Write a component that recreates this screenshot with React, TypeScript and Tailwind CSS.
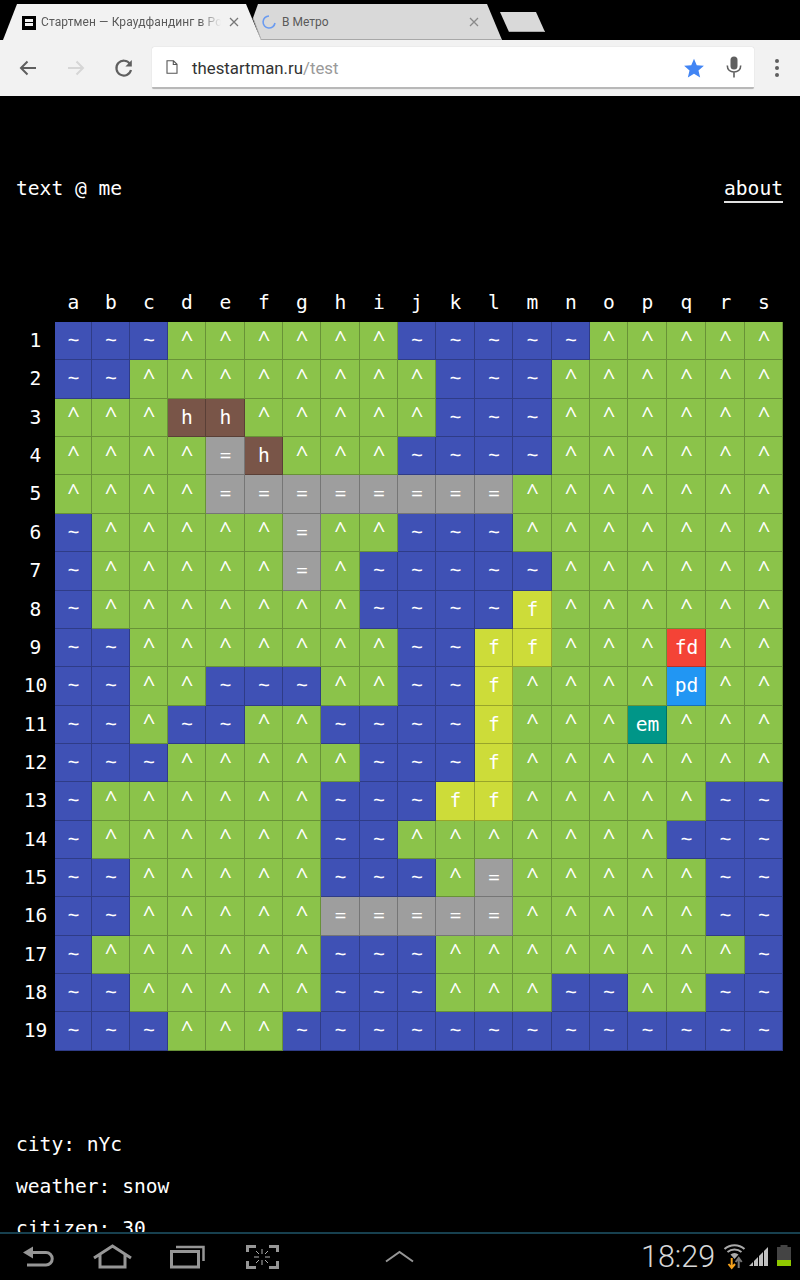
const mono = "font-['DejaVu_Sans_Mono',monospace]";

const columns = "abcdefghijklmnopqrs".split("");

// one token per cell, row 1 to 19
const rows = [
  "~ ~ ~ ^ ^ ^ ^ ^ ^ ~ ~ ~ ~ ~ ^ ^ ^ ^ ^",
  "~ ~ ^ ^ ^ ^ ^ ^ ^ ^ ~ ~ ~ ^ ^ ^ ^ ^ ^",
  "^ ^ ^ h h ^ ^ ^ ^ ^ ~ ~ ~ ^ ^ ^ ^ ^ ^",
  "^ ^ ^ ^ = h ^ ^ ^ ~ ~ ~ ~ ^ ^ ^ ^ ^ ^",
  "^ ^ ^ ^ = = = = = = = = ^ ^ ^ ^ ^ ^ ^",
  "~ ^ ^ ^ ^ ^ = ^ ^ ~ ~ ~ ^ ^ ^ ^ ^ ^ ^",
  "~ ^ ^ ^ ^ ^ = ^ ~ ~ ~ ~ ~ ^ ^ ^ ^ ^ ^",
  "~ ^ ^ ^ ^ ^ ^ ^ ~ ~ ~ ~ f ^ ^ ^ ^ ^ ^",
  "~ ~ ^ ^ ^ ^ ^ ^ ^ ~ ~ f f ^ ^ ^ fd ^ ^",
  "~ ~ ^ ^ ~ ~ ~ ^ ^ ~ ~ f ^ ^ ^ ^ pd ^ ^",
  "~ ~ ^ ~ ~ ^ ^ ~ ~ ~ ~ f ^ ^ ^ em ^ ^ ^",
  "~ ~ ~ ^ ^ ^ ^ ^ ~ ~ ~ f ^ ^ ^ ^ ^ ^ ^",
  "~ ^ ^ ^ ^ ^ ^ ~ ~ ~ f f ^ ^ ^ ^ ^ ~ ~",
  "~ ^ ^ ^ ^ ^ ^ ~ ~ ^ ^ ^ ^ ^ ^ ^ ~ ~ ~",
  "~ ~ ^ ^ ^ ^ ^ ~ ~ ~ ^ = ^ ^ ^ ^ ^ ~ ~",
  "~ ~ ^ ^ ^ ^ ^ = = = = = ^ ^ ^ ^ ^ ~ ~",
  "~ ^ ^ ^ ^ ^ ^ ~ ~ ~ ^ ^ ^ ^ ^ ^ ^ ^ ~",
  "~ ~ ^ ^ ^ ^ ^ ~ ~ ~ ^ ^ ^ ~ ~ ^ ^ ~ ~",
  "~ ~ ~ ^ ^ ^ ~ ~ ~ ~ ~ ~ ~ ~ ~ ~ ~ ~ ~",
].map((r) => r.split(" "));

const cellColors: Record<string, string> = {
  "~": "bg-[#3f51b5]",
  "^": "bg-[#8bc34a]",
  h: "bg-[#795548]",
  "=": "bg-[#9e9e9e]",
  f: "bg-[#cddc39]",
  fd: "bg-[#f44336]",
  pd: "bg-[#2196f3]",
  em: "bg-[#009688]",
};

function cellText(cell: string) {
  if (cell === "^") return "pb-[5px] font-['Open_Sans',sans-serif] text-[22px]";
  if (cell === "~" || cell === "=") return "font-['Open_Sans',sans-serif] text-[21px]";
  return "text-[19.6px]";
}

function TabStrip() {
  return (
    <div className="relative h-10 bg-black">
      <svg width="800" height="40" className="absolute inset-0">
        <path d="M258 4 L253 18 L261 40 H502 L487 4 Z" fill="#d9d9d9" />
        <path d="M253 18 L261 39.500 H502" stroke="#a8a8a8" strokeWidth="1" fill="none" />
        <path d="M500 12 H536 L545 32 H509 Z" fill="#d9d9d9" />
        <path d="M509 31.500 H545" stroke="#aaa" strokeWidth="1" />
        <path d="M3 40 L17 4 H246 L261 40 Z" fill="#f2f2f2" />
      </svg>
      {/* active tab */}
      <div className="absolute left-[22px] top-[16px] h-[14px] w-[14px] bg-black">
        <div className="absolute left-0 top-[3px] h-[7px] w-[11px] bg-[#f2f2f2]" />
        <div className="absolute left-[3px] top-[6px] h-[1px] w-[8px] bg-black" />
        <div className="absolute left-0 top-0 h-[10px] w-[3px] bg-black" />
      </div>
      <div className="absolute left-[41px] top-[13px] w-[180px] overflow-hidden whitespace-nowrap font-['Roboto',sans-serif] text-[12px] leading-[18px] tracking-[0.1px] text-[#5a5a5a] [mask-image:linear-gradient(to_right,black_88%,transparent)]">
        Стартмен — Краудфандинг в России
      </div>
      <svg width="10" height="10" viewBox="0 0 10 10" className="absolute left-[229px] top-[17px]">
        <path d="M1 1 L9 9 M9 1 L1 9" stroke="#777" strokeWidth="1.3" />
      </svg>
      {/* second tab */}
      <svg width="16" height="16" viewBox="0 0 16 16" className="absolute left-[261px] top-[14px]">
        <path d="M8 2 A6 6 0 1 0 14 9" fill="none" stroke="#6a9bf0" strokeWidth="1.6" />
      </svg>
      <div className="absolute left-[282px] top-[13px] font-['Roboto',sans-serif] text-[12px] leading-[18px] text-[#5a5a5a]">
        В Метро
      </div>
      <svg width="10" height="10" viewBox="0 0 10 10" className="absolute left-[469px] top-[17px]">
        <path d="M1 1 L9 9 M9 1 L1 9" stroke="#8a8a8a" strokeWidth="1.3" />
      </svg>
    </div>
  );
}

function Toolbar() {
  return (
    <div className="flex h-14 items-center bg-[#f2f2f2]">
      <div className="flex w-[152px] items-center pl-[18px]">
        <svg width="20" height="20" viewBox="0 0 20 20">
          <path d="M18 10 H3 M9.500 3.500 L3 10 L9.500 16.500" fill="none" stroke="#5f5f5f" strokeWidth="2" />
        </svg>
        <svg width="20" height="20" viewBox="0 0 20 20" className="ml-[28px]">
          <path d="M2 10 H17 M10.500 3.500 L17 10 L10.500 16.500" fill="none" stroke="#d6d6d6" strokeWidth="2" />
        </svg>
        <svg width="20" height="20" viewBox="0 0 20 20" className="ml-[28px]">
          <path d="M16 6 A7.400 7.400 0 1 0 17 12" fill="none" stroke="#5f5f5f" strokeWidth="2.200" />
          <path d="M17.800 2 V8.400 H11.400 Z" fill="#5f5f5f" />
        </svg>
      </div>
      <div className="flex h-[42px] w-[602px] items-center rounded-[2px] border-b-2 border-[#b8b8b8] bg-white shadow-[0_0_1px_#bbb]">
        <svg width="12" height="14" viewBox="0 0 12 14" className="ml-[14px]">
          <path d="M1 .8 H7.500 L11 4.300 V13.200 H1 Z M7.300 .8 V4.500 H11" fill="none" stroke="#555" strokeWidth="1.100" />
        </svg>
        <div className="ml-[14px] mt-[2px] flex-1 font-['Roboto',sans-serif] text-[16.800px] leading-5 text-[#333]">
          thestartman.ru<span className="text-[#9a9a9a]">/test</span>
        </div>
        <svg width="22" height="22" viewBox="0 0 24 24" className="mr-[21px] mt-[1px]">
          <path d="M12 1.800 L15 9 L22.800 9.600 L16.900 14.700 L18.700 22.300 L12 18.300 L5.300 22.300 L7.100 14.700 L1.200 9.600 L9 9 Z" fill="#4285f4" />
        </svg>
        <svg width="16" height="22" viewBox="0 0 16 22" className="mr-[12px]">
          <rect x="4.500" y="0.500" width="7" height="13" rx="3.500" fill="#5f5f5f" />
          <path d="M1.300 9.500 C1.300 14 4.500 16 8 16 C11.500 16 14.700 14 14.700 9.500 M8 16 V21.500" fill="none" stroke="#5f5f5f" strokeWidth="1.600" />
        </svg>
      </div>
      <div className="ml-[21px] flex flex-col gap-[3px]">
        <div className="h-1 w-1 rounded-full bg-[#5f5f5f]" />
        <div className="h-1 w-1 rounded-full bg-[#5f5f5f]" />
        <div className="h-1 w-1 rounded-full bg-[#5f5f5f]" />
      </div>
    </div>
  );
}

function WorldMap() {
  return (
    <div className="ml-[16px] mr-[17px] mt-[81px]">
      <div className="grid grid-cols-[39px_37px_38px_38px_38px_39px_38px_38px_39px_38px_38px_39px_38px_39px_38px_38px_39px_39px_39px_38px] text-[19.600px] text-white">
        <div />
        {columns.map((c) => (
          <div key={c} className="h-[38px] text-center leading-[38px]">
            {c}
          </div>
        ))}
        {rows.map((row, y) => (
          <div key={y} className="contents">
            <div className="h-[38.370px] text-center leading-[37px]">{y + 1}</div>
            {row.map((cell, x) => (
              <div
                key={x}
                className={`${cellColors[cell]} ${cellText(cell)} flex h-[38.370px] items-center justify-center border-b border-r border-black/25 pl-px`}
              >
                {cell}
              </div>
            ))}
          </div>
        ))}
      </div>
    </div>
  );
}

function SystemBar() {
  return (
    <div className="relative h-[48px] shrink-0 border-t-2 border-[#17404f] bg-black">
      <svg width="420" height="40" viewBox="0 0 420 40" className="absolute left-0 top-[9px]">
        <g fill="none" stroke="#969696" strokeWidth="3">
          <path d="M30 9.500 H46 A6.250 6.250 0 0 1 46 22 H27" />
          <path d="M94 15 L112.500 3 L131 15 M100 12 V24 H125 V12" />
          <rect x="171.500" y="8.500" width="27" height="15.500" />
          <path d="M176 4 H203.500 V18" strokeWidth="2.500" />
          <path d="M247.500 9 V3.500 H256 M269 3.500 H277.500 V9 M247.500 18 V24.500 H256 M269 24.500 H277.500 V18" />
          <path d="M386 18.500 L399.500 9 L413 18.500" strokeWidth="2" />
        </g>
        <path d="M23 9.500 L33 3.500 V15.500 Z" fill="#969696" />
        <path d="M262 6 V11 M262 17 V22 M254 14 H259 M265 14 H270 M256 8 L259 11 M268 8 L265 11 M256 20 L259 17 M268 20 L265 17" stroke="#b0b0b0" strokeWidth="1" />
      </svg>
      <div className="absolute left-[641px] top-[5px] font-['Roboto',sans-serif] text-[30.500px] font-light leading-9 text-[#d8d8d8]">
        18:29
      </div>
      <svg width="80" height="40" viewBox="0 0 80 40" className="absolute left-[720px] top-0">
        <g fill="none" stroke="#aaa" strokeWidth="2">
          <path d="M4.500 15 A15 15 0 0 1 24.500 15" />
          <path d="M7.500 18 A11 11 0 0 1 21.500 18" />
        </g>
        <path d="M10.500 20.500 A6 6 0 0 1 18.500 20.500 L14.500 25 Z" fill="#aaa" />
        <path d="M11.700 24 V33 M8.500 30 L11.700 34 L15 30" fill="none" stroke="#f4a11c" strokeWidth="2" />
        <path d="M18.700 34 V25 M15.700 28 L18.700 24 L21.700 28" fill="none" stroke="#777" strokeWidth="2" />
        <path d="M29 32 L33 28 V32 Z M34 32 V27 L38 23 V32 Z M39 32 V22 L43 18 V32 Z M44 32 V17 L48 13 V32 Z" fill="#c0c0c0" />
        <rect x="57" y="13" width="14" height="19" fill="#444" />
        <rect x="60.500" y="11" width="7" height="2" fill="#444" />
        <rect x="57" y="26" width="14" height="6" fill="#8fc800" />
      </svg>
    </div>
  );
}

export default function App() {
  return (
    <div className="flex h-[1280px] w-[800px] flex-col overflow-hidden bg-black">
      <TabStrip />
      <Toolbar />
      <div className={`${mono} min-h-0 flex-1 overflow-hidden text-[19.600px] text-white`}>
        <div className="mt-[80px] flex items-start justify-between pl-[16px] pr-[17px]">
          <div className="leading-[25px]">text @ me</div>
          <div className="border-b-2 border-[#e0e0e0] leading-[25px]">about</div>
        </div>
        <WorldMap />
        <div className="mt-[80px] flex flex-col gap-[14px] px-[16px] leading-7">
          <div>city: nYc</div>
          <div>weather: snow</div>
          <div>citizen: 30</div>
        </div>
      </div>
      <SystemBar />
    </div>
  );
}
